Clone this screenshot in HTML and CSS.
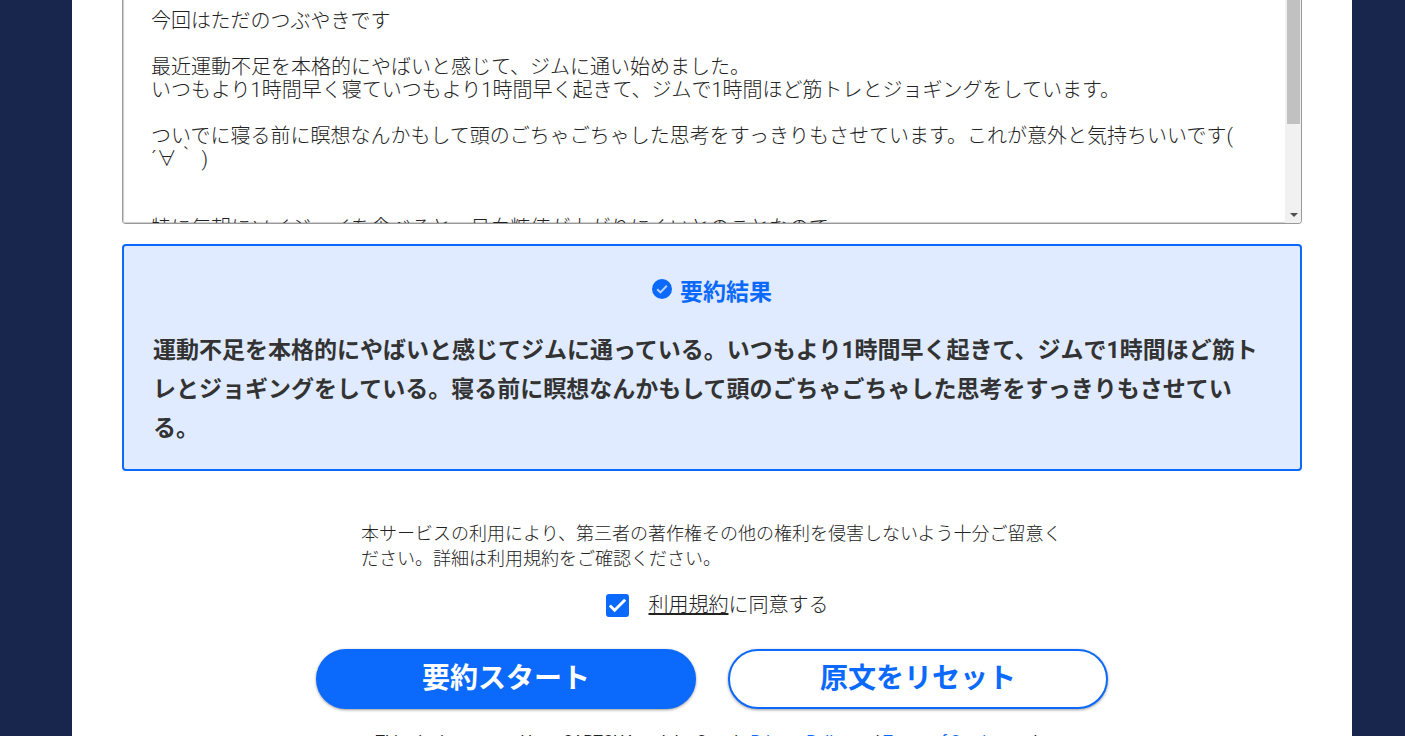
FILE: index.html
```html
<!DOCTYPE html>
<html lang="ja">

<head>
    <meta charset="UTF-8">
    <meta name="viewport" content="width=device-width, initial-scale=1.0">
    <title>要約</title>
    <link rel="stylesheet" href="styles.css">
</head>

<body>
    <main class="panel">
        <form class="summary_form">
            <div class="source_box">
                <textarea class="source_text" name="source" aria-label="原文">今回はただのつぶやきです

最近運動不足を本格的にやばいと感じて、ジムに通い始めました。
いつもより1時間早く寝ていつもより1時間早く起きて、ジムで1時間ほど筋トレとジョギングをしています。

ついでに寝る前に瞑想なんかもして頭のごちゃごちゃした思考をすっきりもさせています。これが意外と気持ちいいです(
´∀｀ )


特に毎朝にソイジョイを食べると、日血糖値が上がりにくいとのことなので
</textarea>
                <div class="scrollbar" aria-hidden="true">
                    <div class="scroll_thumb"></div>
                    <svg class="scroll_arrow" viewBox="0 0 8 4">
                        <path d="M0 0h8L4 4z" fill="#505050" />
                    </svg>
                </div>
            </div>

            <section class="result">
                <h2 class="result_title">
                    <svg class="result_icon" viewBox="0 0 20 20" aria-hidden="true">
                        <circle cx="10" cy="10" r="10" fill="#0b69fb" />
                        <path d="M5.2 10.2l3.2 3.2 6.4-6.6" fill="none" stroke="#b9d3fd" stroke-width="2" />
                    </svg>
                    <span>要約結果</span>
                </h2>
                <p class="result_text">運動不足を本格的にやばいと感じてジムに通っている。いつもより1時間早く起きて、ジムで1時間ほど筋トレとジョギングをしている。寝る前に瞑想なんかもして頭のごちゃごちゃした思考をすっきりもさせている。</p>
            </section>

            <p class="note">本サービスの利用により、第三者の著作権その他の権利を侵害しないよう十分ご留意く<wbr>ださい。詳細は利用規約をご確認ください。</p>

            <div class="agree">
                <span class="check_box">
                    <input type="checkbox" id="agree" class="agree_check" checked>
                    <svg class="check_mark" viewBox="0 0 24 24" aria-hidden="true">
                        <path d="M4 12l5 5L20 6" fill="none" stroke="white" stroke-width="3" />
                    </svg>
                </span>
                <label for="agree"><a href="#">利用規約</a>に同意する</label>
            </div>

            <div class="buttons">
                <button type="button" class="btn btn_start">要約スタート</button>
                <button type="reset" class="btn btn_reset">原文をリセット</button>
            </div>

            <p class="recaptcha">This site is protected by reCAPTCHA and the Google <a href="#">Privacy Policy</a> and <a href="#">Terms of Service</a> apply.</p>
        </form>
    </main>
</body>

</html>
```
FILE: styles.css
```css
* {
    box-sizing: border-box;
}

body {
    margin: 0;
    padding: 0 53px 0 72px;
    background-color: #18254d;
    color: #222;
    font-family: Roboto, "Noto Sans CJK JP", sans-serif;
    font-weight: 300;
}

.panel {
    background-color: white;
    padding: 0 50px 40px;
}

.summary_form {
    display: flex;
    flex-direction: column;
    align-items: center;
}

.source_box {
    display: flex;
    width: 100%;
    height: 224px;
    border: 1px solid #999;
    border-top: 0;
    border-radius: 0 0 4px 4px;
    overflow: hidden;
}

.source_text {
    flex: 1;
    padding: 10px 12px 0 28px;
    border: 0;
    box-shadow: inset 1px -1px 1px #ccc;
    background-color: white;
    color: inherit;
    font: inherit;
    font-size: 20px;
    line-height: 23px;
    resize: none;
    outline: none;
}

.scrollbar {
    display: flex;
    flex-direction: column;
    justify-content: space-between;
    width: 16px;
    padding: 0 1px 6px 2px;
    background-color: #f1f1f1;
}

.scroll_thumb {
    height: 124px;
    background-color: #c1c1c1;
}

.scroll_arrow {
    width: 8px;
    height: 4px;
    align-self: center;
}

.result {
    width: 100%;
    margin-top: 20px;
    padding: 29px 29px 21px;
    border: 2px solid #0b69fb;
    border-radius: 4px;
    background-color: #e0ebff;
}

.result_title {
    display: flex;
    justify-content: center;
    gap: 8px;
    margin: 0 0 20px;
    color: #0b69fb;
    font-size: 23px;
    line-height: 36px;
}

.result_icon {
    width: 20px;
    height: 20px;
    margin-top: 4px;
}

.result_text {
    margin: 0;
    color: #333;
    font-size: 23px;
    font-weight: 700;
    line-height: 39px;
}

.note {
    width: 702px;
    max-width: 100%;
    margin: 50px 0 22px;
    font-size: 18px;
    line-height: 25px;
    word-break: keep-all;
}

.agree {
    display: flex;
    align-items: center;
    gap: 20px;
    padding-left: 10px;
    font-size: 20px;
    line-height: 25px;
}

.check_box {
    display: grid;
}

.agree_check {
    grid-area: 1 / 1;
    width: 23px;
    height: 23px;
    margin: 0;
    appearance: none;
    border: 2px solid #0b69fb;
    border-radius: 3px;
}

.agree_check:checked {
    background-color: #0b69fb;
}

.check_mark {
    grid-area: 1 / 1;
    width: 23px;
    height: 23px;
    pointer-events: none;
}

.agree a {
    color: inherit;
}

.buttons {
    display: flex;
    justify-content: center;
    gap: 32px;
    width: 100%;
    margin-top: 31px;
}

.btn {
    width: 380px;
    height: 60px;
    padding: 0 0 6px;
    border: 2px solid #0b69fb;
    border-radius: 30px;
    box-shadow: 0 1px 3px rgba(0, 0, 0, 0.4);
    font: inherit;
    font-size: 28px;
    font-weight: 700;
    cursor: pointer;
}

.btn_start {
    background-color: #0b69fb;
    color: white;
}

.btn_reset {
    background-color: white;
    color: #0b69fb;
}

.recaptcha {
    margin: 20px 0 0;
    font-size: 16px;
    font-weight: 400;
    line-height: 25px;
}

.recaptcha a {
    color: #0b69fb;
    text-decoration: none;
}
```
